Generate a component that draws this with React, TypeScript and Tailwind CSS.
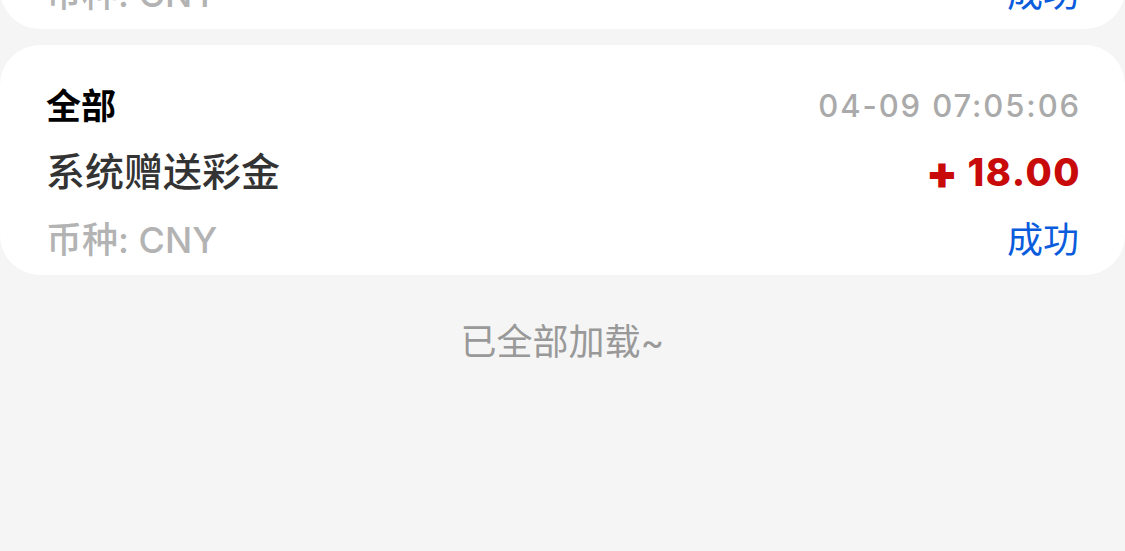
const font = "font-['Inter','Noto_Sans_CJK_SC',sans-serif]";

type Record = {
  type: string;
  time: string;
  title: string;
  amount: string;
  currency: string;
  status: string;
};

const records: Record[] = [
  {
    type: "全部",
    time: "04-09 07:12:44",
    title: "系统赠送彩金",
    amount: "18.00",
    currency: "CNY",
    status: "成功",
  },
  {
    type: "全部",
    time: "04-09 07:05:06",
    title: "系统赠送彩金",
    amount: "18.00",
    currency: "CNY",
    status: "成功",
  },
];

function RecordCard({ r, className = "" }: { r: Record; className?: string }) {
  return (
    <div className={`h-[230px] rounded-[40px] bg-white px-[46px] pt-[41px] pb-[15px] ${className}`}>
      <div className="flex h-[40px] items-center justify-between">
        <span className="text-[35px] font-bold text-black">{r.type}</span>
        <span className="-mr-[2px] text-[31px] font-medium tracking-[1.9px] text-[#aaaaaa]">{r.time}</span>
      </div>
      <div className="mt-6 flex h-[44px] items-center justify-between">
        <span className="text-[39px] font-medium text-[#333333]">{r.title}</span>
        <span className="-mr-[2px] flex items-center text-[38px] font-extrabold tracking-[1.5px] text-[#c80a0a]">
          <span className="mr-[8px] text-[46px] leading-none font-black">+</span>
          {r.amount}
        </span>
      </div>
      <div className="mt-[26px] flex h-[40px] items-center justify-between">
        <span className="text-[36px] font-medium text-[#b3b3b3]">币种: {r.currency}</span>
        <span className="text-[36px] text-[#0a5cdc]">{r.status}</span>
      </div>
    </div>
  );
}

export default function App() {
  return (
    <div className={`h-[551px] w-[1125px] overflow-hidden bg-[#f5f5f5] ${font}`}>
      <RecordCard r={records[0]} className="-mt-[201px]" />
      <RecordCard r={records[1]} className="mt-4" />
      <p className="mt-10 text-center text-[36px] leading-[54px] text-[#999999]">已全部加载~</p>
    </div>
  );
}
